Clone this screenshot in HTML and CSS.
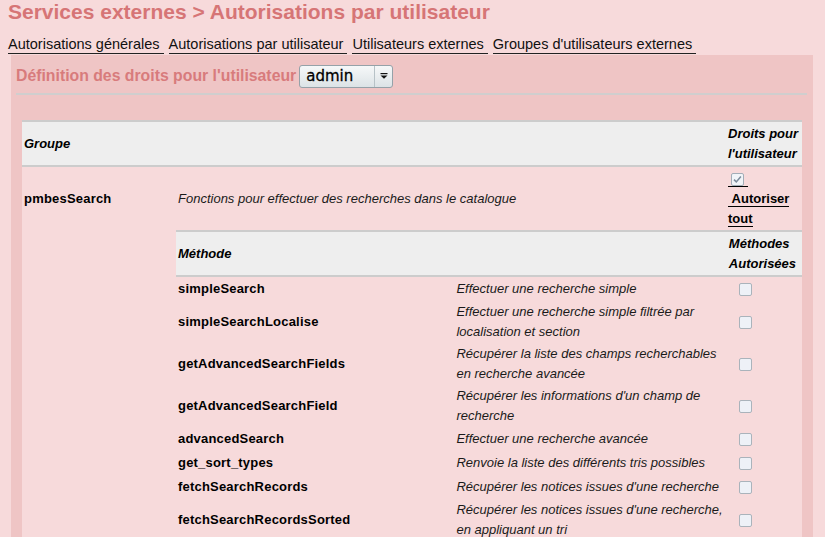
FILE: index.html
```html
<!DOCTYPE html>
<html lang="fr">
<head>
<meta charset="utf-8">
<title>Services externes</title>
<link rel="stylesheet" href="styles.css">
</head>
<body>
<div class="page">
  <h1 class="title">Services externes &gt; Autorisations par utilisateur</h1>
  <nav class="tabs">
    <a class="tab">Autorisations générales</a>
    <a class="tab">Autorisations par utilisateur</a>
    <a class="tab">Utilisateurs externes</a>
    <a class="tab">Groupes d'utilisateurs externes</a>
  </nav>
  <div class="box">
    <div class="bar">
      <h2 class="bar-title">Définition des droits pour l'utilisateur</h2>
      <div class="select">
        <span class="select-val">admin</span>
        <span class="select-arrow"><svg width="8" height="7" viewBox="0 0 8 7"><rect x="0.5" y="0" width="7" height="1.2" fill="#111"/><path d="M0.5 2.6 H7.5 L4 5.8 Z" fill="#111"/></svg></span>
      </div>
    </div>
    <hr class="rule">
    <table class="rights">
      <colgroup><col class="c-g1"><col class="c-g2"><col class="c-g3"></colgroup>
      <thead>
        <tr><th>Groupe</th><th></th><th>Droits pour<br>l'utilisateur</th></tr>
      </thead>
      <tbody>
        <tr class="group">
          <td class="name">pmbesSearch</td>
          <td class="desc">Fonctions pour effectuer des recherches dans le catalogue</td>
          <td class="allcell"><a class="all"><span class="cb on"><svg width="11" height="11" viewBox="0 0 11 11"><path d="M2 5.6 L4.3 7.9 L8.9 2.6" fill="none" stroke="#7c8c9c" stroke-width="1.5"/></svg></span><br>&nbsp;Autoriser<br>tout</a></td>
        </tr>
        <tr>
          <td></td>
          <td class="sub" colspan="2">
            <table class="methods">
              <colgroup><col class="c-m1"><col class="c-m2"><col class="c-m3"></colgroup>
              <thead>
                <tr><th>Méthode</th><th></th><th>Méthodes<br>Autorisées</th></tr>
              </thead>
              <tbody>
                <tr><td class="name">simpleSearch</td><td class="desc">Effectuer une recherche simple</td><td class="cbcell"><span class="cb"></span></td></tr>
                <tr><td class="name">simpleSearchLocalise</td><td class="desc">Effectuer une recherche simple filtrée par<br>localisation et section</td><td class="cbcell"><span class="cb"></span></td></tr>
                <tr><td class="name">getAdvancedSearchFields</td><td class="desc">Récupérer la liste des champs recherchables<br>en recherche avancée</td><td class="cbcell"><span class="cb"></span></td></tr>
                <tr><td class="name">getAdvancedSearchField</td><td class="desc">Récupérer les informations d'un champ de<br>recherche</td><td class="cbcell"><span class="cb"></span></td></tr>
                <tr><td class="name">advancedSearch</td><td class="desc">Effectuer une recherche avancée</td><td class="cbcell"><span class="cb"></span></td></tr>
                <tr><td class="name">get_sort_types</td><td class="desc">Renvoie la liste des différents tris possibles</td><td class="cbcell"><span class="cb"></span></td></tr>
                <tr><td class="name">fetchSearchRecords</td><td class="desc">Récupérer les notices issues d'une recherche</td><td class="cbcell"><span class="cb"></span></td></tr>
                <tr><td class="name">fetchSearchRecordsSorted</td><td class="desc">Récupérer les notices issues d'une recherche,<br>en appliquant un tri</td><td class="cbcell"><span class="cb"></span></td></tr>
              </tbody>
            </table>
          </td>
        </tr>
      </tbody>
    </table>
  </div>
</div>
</body>
</html>
```
FILE: styles.css
```css
body {
  margin: 0;
  background: #f7dadb;
  font-family: "Liberation Sans", Arial, sans-serif;
  color: #000;
}
.page {
  padding: 0 12px 0 8px;
}
.title {
  margin: 0;
  font-size: 21px;
  line-height: 24px;
  font-weight: bold;
  color: #d67576;
}
.tabs {
  display: flex;
  gap: 5px;
  margin-top: 12px;
}
.tab {
  font-size: 14.5px;
  line-height: 16.7px;
  padding-right: 4px;
  border-bottom: 1px solid #222;
  color: #111;
  text-decoration: none;
}
.box {
  margin: 1px 0 0 3px;
  background: #efc5c5;
  padding: 10px 6px 20px 5px;
}
.bar {
  display: flex;
  align-items: center;
  gap: 3px;
  height: 23px;
}
.bar-title {
  margin: 0;
  font-size: 15.8px;
  font-weight: bold;
  color: #d87b7c;
}
.select {
  width: 94px;
  height: 23px;
  box-sizing: border-box;
  border: 1px solid #95a2a9;
  border-radius: 3px;
  background: linear-gradient(#f6f8f9, #dce3e6);
  display: flex;
  align-items: center;
}
.select-val {
  flex: 1;
  padding-left: 6px;
  font-family: "DejaVu Sans", sans-serif;
  font-size: 15px;
  line-height: 21px;
  padding-top: 1px;
  color: #000;
  -webkit-text-stroke: 0.3px #000;
}
.select-arrow {
  width: 17px;
  height: 100%;
  border-left: 1px solid #b7c2c7;
  display: flex;
  align-items: center;
  justify-content: center;
}
.rule {
  margin: 5px 0 0;
  border: 0;
  height: 2px;
  background: #d0cece;
}
.rights {
  margin: 25px 0 0 6px;
  width: 780px;
  table-layout: fixed;
  border-collapse: separate;
  border-spacing: 0;
  background: #f7dadb;
  font-size: 13px;
  line-height: 20px;
}
.c-g1 { width: 154px; }
.c-g2 { width: 550px; }
.c-g3 { width: 76px; }
.methods {
  width: 100%;
  table-layout: fixed;
  border-collapse: separate;
  border-spacing: 0;
}
.c-m1 { width: 278px; }
.c-m2 { width: 272px; }
.c-m3 { width: 75px; }
.rights th,
.rights td {
  padding: 2px 2px 1px;
  text-align: left;
  vertical-align: middle;
}
.rights th {
  background: #eeeeee;
  border-top: 2px solid #cccccc;
  border-bottom: 2px solid #cccccc;
  font-style: italic;
  font-weight: bold;
}
.rights td.sub {
  padding: 0;
}
.methods tbody td {
  padding: 1px 2px;
}
.methods tbody tr {
  height: 24px;
}
.name {
  font-weight: bold;
  letter-spacing: 0.2px;
}
.desc {
  font-style: italic;
  color: #1a1a1a;
  white-space: nowrap;
}
.methods td.cbcell {
  padding-left: 12px;
}
.cb {
  display: inline-block;
  width: 11px;
  height: 11px;
  border: 1px solid #aab3bb;
  border-radius: 2px;
  background: #eef1f7;
  vertical-align: middle;
}
.cb svg {
  display: block;
}
.cb.on {
  border-color: #a3adb7;
  background: #f1f4f8;
  margin: 0 4px 0 3px;
}
.allcell {
  vertical-align: top;
}
.all {
  font-weight: bold;
  color: #000;
  text-decoration: none;
  border-bottom: 1px solid #000;
}
```
